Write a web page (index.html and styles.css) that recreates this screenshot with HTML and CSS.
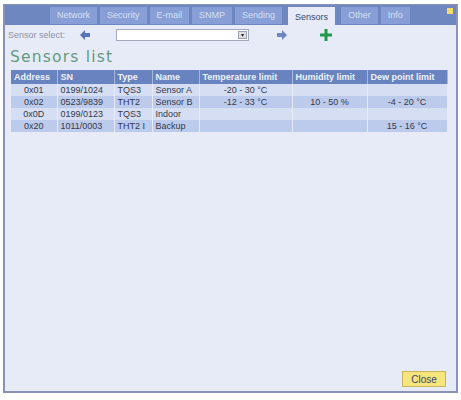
FILE: index.html
```html
<!DOCTYPE html>
<html lang="en">
<head>
    <meta charset="UTF-8">
    <title>Sensors</title>
    <link rel="stylesheet" href="styles.css">
</head>
<body>

<div class="window">
    <div class="tabbar">
        <div class="tabs">
            <span class="tab">Network</span>
            <span class="tab">Security</span>
            <span class="tab">E-mail</span>
            <span class="tab">SNMP</span>
            <span class="tab">Sending</span>
            <span class="tab active">Sensors</span>
            <span class="tab">Other</span>
            <span class="tab">Info</span>
        </div>
        <span class="corner"></span>
    </div>

    <div class="content">
        <div class="toolbar">
            <span class="label">Sensor select:</span>
            <svg class="arrow left" width="10" height="10" viewBox="0 0 10 10">
                <path d="M0 5 L5 0 L5 3 L10 3 L10 7 L5 7 L5 10 Z" fill="#5573b8"/>
            </svg>
            <div class="select"><span class="drop">&#9662;</span></div>
            <svg class="arrow right" width="10" height="10" viewBox="0 0 10 10">
                <path d="M10 5 L5 0 L5 3 L0 3 L0 7 L5 7 L5 10 Z" fill="#6f86c4"/>
            </svg>
            <svg class="plus" width="12" height="12" viewBox="0 0 12 12">
                <path d="M4.5 0 H7.5 V4.5 H12 V7.5 H7.5 V12 H4.5 V7.5 H0 V4.5 H4.5 Z" fill="#1f9a4c"/>
            </svg>
        </div>

        <h2>Sensors list</h2>

        <table class="sensors">
            <thead>
                <tr>
                    <th class="c-addr">Address</th>
                    <th class="c-sn">SN</th>
                    <th class="c-type">Type</th>
                    <th class="c-name">Name</th>
                    <th class="c-temp">Temperature limit</th>
                    <th class="c-hum">Humidity limit</th>
                    <th class="c-dew">Dew point limit</th>
                </tr>
            </thead>
            <tbody>
                <tr>
                    <td class="mid">0x01</td><td>0199/1024</td><td>TQS3</td><td>Sensor A</td>
                    <td class="mid">-20 - 30 °C</td><td></td><td></td>
                </tr>
                <tr>
                    <td class="mid">0x02</td><td>0523/9839</td><td>THT2</td><td>Sensor B</td>
                    <td class="mid">-12 - 33 °C</td><td class="mid">10 - 50 %</td><td class="mid">-4 - 20 °C</td>
                </tr>
                <tr>
                    <td class="mid">0x0D</td><td>0199/0123</td><td>TQS3</td><td>Indoor</td>
                    <td></td><td></td><td></td>
                </tr>
                <tr>
                    <td class="mid">0x20</td><td>1011/0003</td><td>THT2 I</td><td>Backup</td>
                    <td></td><td></td><td class="mid">15 - 16 °C</td>
                </tr>
            </tbody>
        </table>

        <div class="footer">
            <button class="close">Close</button>
        </div>
    </div>
</div>

</body>
</html>
```

FILE: styles.css
```css
body {
    margin: 0;
    padding: 4px 5px 0 3px;
    background-color: #fff;
    font-family: "Liberation Sans", Tahoma, Arial, sans-serif;
    font-size: 9px;
}

.window {
    width: 451px;
    height: 386px;
    border: 2px solid #8a93b3;
    border-top: 1px solid #8a93b3;
    display: flex;
    flex-direction: column;
    background-color: #e7ebf8;
}

.tabbar {
    height: 20px;
    background-color: #6e87c1;
    display: flex;
    align-items: flex-end;
    justify-content: space-between;
    padding-left: 45px;
}

.tabs {
    display: flex;
    gap: 3px;
}

.tab {
    height: 17px;
    padding: 0 7px;
    background-color: #879fd6;
    color: #d6e0f4;
    line-height: 17px;
    font-size: 9px;
}

.tab.active {
    background-color: #e7ebf8;
    color: #3a4668;
    height: 18px;
    line-height: 20px;
    margin: 0 3px;
}

.corner {
    width: 6px;
    height: 6px;
    background-color: #f2dc6a;
    align-self: flex-start;
    margin: 3px 3px 0 0;
}

.content {
    flex: 1;
    display: flex;
    flex-direction: column;
    padding: 3px 7px 4px 3px;
}

.toolbar {
    display: flex;
    align-items: center;
    height: 13px;
}

.label {
    color: #8d93a6;
    font-size: 9px;
    width: 72px;
}

.arrow.left {
    margin-right: 26px;
}

.select {
    width: 131px;
    height: 10px;
    background-color: #fff;
    border: 1px solid #a4aabb;
    display: flex;
    justify-content: flex-end;
    align-items: center;
}

.drop {
    width: 9px;
    height: 8px;
    margin-right: 1px;
    background-color: #dfe1e6;
    border: 1px solid #9aa0b0;
    box-sizing: border-box;
    font-size: 6px;
    line-height: 6px;
    text-align: center;
    color: #222;
}

.arrow.right {
    margin-left: 28px;
}

.plus {
    margin-left: 33px;
}

h2 {
    margin: 7px 0 4px 2px;
    font-family: "DejaVu Sans", Verdana, sans-serif;
    font-size: 15.5px;
    font-weight: normal;
    letter-spacing: 1.2px;
    color: #639a7e;
}

.sensors {
    border-collapse: collapse;
    table-layout: fixed;
    width: 436px;
    margin-left: 3px;
}

.sensors th {
    background-color: #6883bf;
    color: #eef2fb;
    text-align: left;
    font-weight: bold;
    height: 14px;
    padding: 0 3px;
    white-space: nowrap;
    box-sizing: border-box;
    border-right: 1px solid #a8b7de;
}

.sensors td {
    height: 12px;
    padding: 0 3px;
    color: #333a4a;
    white-space: nowrap;
    border-right: 1px solid #e7ebf8;
}

.sensors tbody tr:nth-child(odd) td {
    background-color: #d6def3;
}

.sensors tbody tr:nth-child(even) td {
    background-color: #bccaec;
}

.sensors .mid {
    text-align: center;
}

.c-addr { width: 46px; }
.c-sn { width: 57px; }
.c-type { width: 38px; }
.c-name { width: 47px; }
.c-temp { width: 93px; }
.c-hum { width: 75px; }
.c-dew { width: 80px; }

.footer {
    margin-top: auto;
    display: flex;
    justify-content: flex-end;
}

.close {
    font-family: "Liberation Sans", Tahoma, Arial, sans-serif;
    font-size: 10px;
    color: #3c4566;
    background-color: #f6e47c;
    border: 1px solid #c7b659;
    height: 16px;
    width: 44px;
    padding: 0;
    margin-right: 3px;
}
```
